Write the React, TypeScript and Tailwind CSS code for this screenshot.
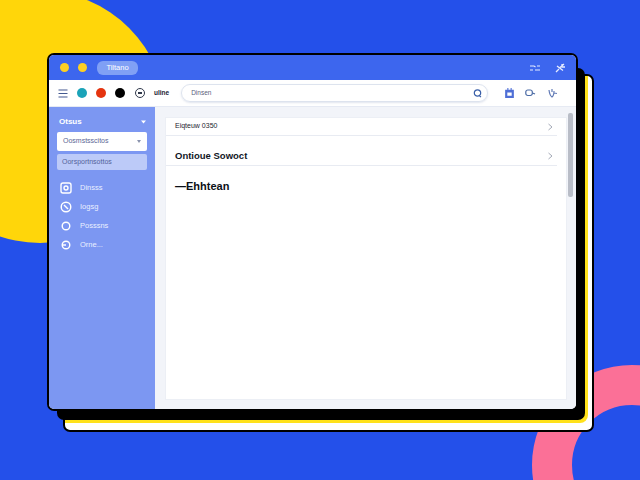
import React from "react";

function Row({ text, cls, h }: { text: string; cls: string; h: string }) {
  return (
    <div className={`mr-[9px] flex items-center justify-between border-b border-[#e8ebf2] pl-[9px] pr-[3px] ${h}`}>
      <span className={cls}>{text}</span>
      <svg width="7" height="8" viewBox="0 0 7 8" fill="none" stroke="#a3a9b6" strokeWidth="1"><path d="M1.500 1l3.500 3-3.500 3" /></svg>
    </div>
  );
}

function NavItem({ label, children }: { label: string; children: React.ReactNode }) {
  return (
    <div className="flex h-[19px] items-center gap-[7px] pl-[10px] text-[7.5px] text-[#eaf0ff]">
      <svg width="14" height="14" viewBox="0 0 14 14" fill="none" stroke="#ffffff" strokeWidth="1.4">{children}</svg>
      <span>{label}</span>
    </div>
  );
}

export default function App() {
  return (
    <div className="relative h-[480px] w-[640px] overflow-hidden bg-[#2450ea] font-['Liberation_Sans',sans-serif]">
      <div className="absolute left-[-86px] top-[-9px] h-[252px] w-[252px] rounded-full bg-[#ffd60a]" />
      <div className="absolute left-[532px] top-[365px] h-[200px] w-[200px] rounded-full border-[40px] border-[#fb7097] bg-[#2450ea]" />
      <div className="absolute left-[63px] top-[74px] h-[358px] w-[531px] rounded-[7px] border-2 border-black bg-white" />
      <div className="absolute left-[65px] top-[76px] h-[347px] w-[523px] rounded-br-[8px] bg-[#ffe11a]" />
      <div className="absolute left-[57px] top-[68px] h-[352px] w-[528px] rounded-[7px] bg-black" />

      <div className="absolute left-[47px] top-[53px] flex h-[358px] w-[531px] flex-col overflow-hidden rounded-[7px] border-2 border-black bg-white">
        <div className="flex h-[25px] shrink-0 items-center bg-[#3d66ee] pl-[11px] pr-[11px]">
          <span className="h-[9px] w-[9px] rounded-full bg-[#fdd023]" />
          <span className="ml-[9px] h-[9px] w-[9px] rounded-full bg-[#fdd023]" />
          <span className="ml-[10px] flex h-[14px] w-[41px] items-center justify-center rounded-[6px] bg-[#80a0f5] text-[7.5px] text-white">Tiltano</span>
          <span className="ml-auto flex items-center gap-[15px]">
            <svg width="10" height="8" viewBox="0 0 10 8" fill="none" stroke="#e6ecff" strokeWidth="1.2"><path d="M0 2h4l1.500 1M10 2H7M0 6h3M5 6h5" /></svg>
            <svg width="10" height="10" viewBox="0 0 10 10" fill="none" stroke="#e6ecff" strokeWidth="1.3"><path d="M1 9l3-3M9 1L5 4.500M2 3l6 4.500M7 1v3h3" /></svg>
          </span>
        </div>

        <div className="flex h-[27px] shrink-0 items-center border-b border-[#e6eaf3] bg-white pl-[9px] text-[#1b2233]">
          <svg width="10" height="9" viewBox="0 0 10 9" fill="none" stroke="#44598f" strokeWidth="1.2"><path d="M0.500 1h9M0.500 4.500h9M0.500 8h9" /></svg>
          <span className="ml-[9px] h-[10px] w-[10px] rounded-full bg-[#1ba3b8]" />
          <span className="ml-[9px] h-[10px] w-[10px] rounded-full bg-[#e5340f]" />
          <span className="ml-[9px] h-[10px] w-[10px] rounded-full bg-black" />
          <span className="ml-[10px] flex h-[10px] w-[10px] items-center justify-center rounded-full border border-[#30384a]"><span className="h-[2px] w-[4px] bg-[#30384a]" /></span>
          <span className="ml-[9px] text-[6.5px] font-bold leading-none">uline</span>
          <div className="ml-[12px] flex h-[18px] w-[307px] items-center justify-between rounded-[9px] border border-[#dde3ee] pl-[9px] pr-[5px] shadow-[0_1px_2px_rgba(90,110,160,0.18)]">
            <span className="text-[6.5px] text-[#59617a]">Dinsen</span>
            <svg width="9" height="9" viewBox="0 0 9 9" fill="none" stroke="#3a5fa8" strokeWidth="1.2"><circle cx="4.500" cy="4" r="3.200" /><path d="M6.500 7l1.500 1" /></svg>
          </div>
          <svg className="ml-[16px]" width="11" height="12" viewBox="0 0 10 11" fill="#4f6fd6"><path d="M1 2.500h2V1h1v1.500h2V1h1v1.500h2V10H1zM3 5v3h4V5z" /></svg>
          <svg className="ml-[10px]" width="11" height="9" viewBox="0 0 11 9" fill="none" stroke="#4a6aa5" strokeWidth="1.200"><rect x="0.800" y="1" width="6.500" height="5.500" rx="2" /><path d="M7.500 4l2.500 1" /></svg>
          <svg className="ml-[11px]" width="11" height="11" viewBox="0 0 11 11" fill="none" stroke="#6079b5" strokeWidth="1.200"><path d="M2 2c.5 4 1.500 6 3 7 1.500-1 2-3 2-6M5 1v3M7 5l3 .5" /></svg>
        </div>

        <div className="flex min-h-0 flex-1">
          <aside className="w-[106px] shrink-0 bg-[#7c97f2] px-[8px] pt-[10px]">
            <div className="flex h-[9px] items-center justify-between pl-[2px] pr-[1px] text-[8px] font-bold text-white">
              <span>Otsus</span>
              <svg width="5" height="4" viewBox="0 0 5 4" fill="#ffffff"><path d="M0 .5h5L2.500 3.500z" /></svg>
            </div>
            <div className="mt-[6px] flex h-[19px] items-center justify-between rounded-[2px] bg-white pl-[6px] pr-[6px] text-[7px] text-[#5a6695]">
              <span>Oosmstsscitos</span>
              <svg width="4" height="3" viewBox="0 0 4 3" fill="#8a93ad"><path d="M0 0h4L2 3z" /></svg>
            </div>
            <div className="mt-[3px] flex h-[16px] items-center rounded-[2px] bg-[#bccaf8] pl-[5px] text-[7px] text-[#53629b]">Oorsportnsottos</div>
            <div className="-mx-[8px] mt-[8px]">
              <NavItem label="Dinsss"><rect x="2" y="2" width="10" height="10" rx="2" /><circle cx="7" cy="7" r="2" /></NavItem>
              <NavItem label="Iogsg"><circle cx="7" cy="7" r="4.800" /><path d="M5 5l4 4" /></NavItem>
              <NavItem label="Posssns"><circle cx="7" cy="7" r="3.800" /></NavItem>
              <NavItem label="Orne..."><circle cx="7" cy="7" r="3.800" /><path d="M3 7h4" /></NavItem>
            </div>
          </aside>

          <main className="flex min-w-0 flex-1 bg-[#f2f4f9] pb-[9px] pl-[10px]">
            <div className="mt-[10px] flex-1 border border-[#eceff5] bg-white">
              <Row text="Eiqteuw 0350" cls="text-[7px] text-[#1d2430]" h="h-[18px]" />
              <Row text="Ontioue Sowoct" cls="text-[9.5px] font-bold text-[#11161f]" h="h-[30px] pt-[11px]" />
              <div className="pl-[9px] pt-[15px] text-[11px] font-bold leading-none text-[#0c1017]">—Ehhtean</div>
            </div>
            <div className="ml-[1px] mt-[6px] w-[8px] shrink-0">
              <div className="h-[84px] w-[5px] rounded-[2px] bg-[#b9bdc7]" />
            </div>
          </main>
        </div>
      </div>
    </div>
  );
}
